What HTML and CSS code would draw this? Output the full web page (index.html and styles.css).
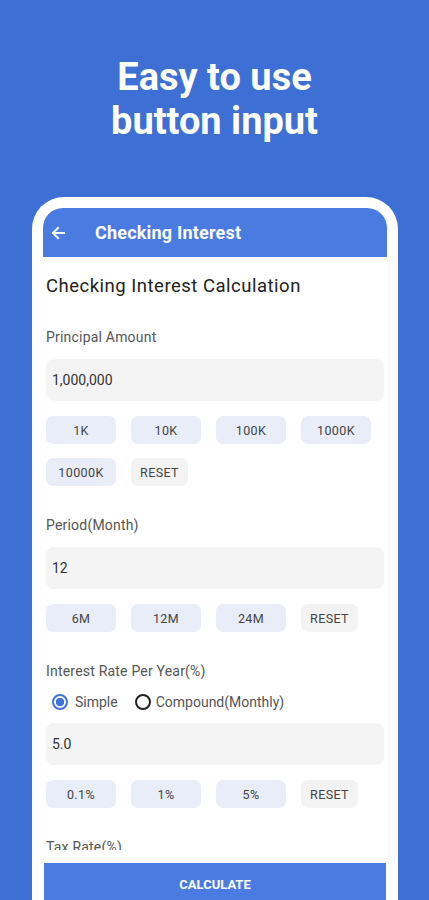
FILE: index.html
```html
<!DOCTYPE html>
<html lang="en">
<head>
  <meta charset="UTF-8" />
  <meta name="viewport" content="width=device-width, initial-scale=1.0" />
  <title>Checking Interest</title>
  <link rel="stylesheet" href="styles.css">
</head>
<body>
  <h1 class="headline">Easy to use<br>button input</h1>

  <div class="phone">
    <div class="screen">
      <div class="appbar">
        <svg class="back" width="16" height="16" viewBox="0 0 16 16">
          <path d="M14 8H3M8 3L3 8l5 5" fill="none" stroke="#fff" stroke-width="2" stroke-linecap="square"/>
        </svg>
        <span class="appbar-title">Checking Interest</span>
      </div>

      <div class="content">
        <h2 class="page-title">Checking Interest Calculation</h2>

        <div class="field">
          <div class="label">Principal Amount</div>
          <div class="input">1,000,000</div>
          <div class="chips">
            <button class="chip">1K</button>
            <button class="chip">10K</button>
            <button class="chip">100K</button>
            <button class="chip">1000K</button>
            <button class="chip">10000K</button>
            <button class="chip reset">RESET</button>
          </div>
        </div>

        <div class="field">
          <div class="label">Period(Month)</div>
          <div class="input">12</div>
          <div class="chips">
            <button class="chip">6M</button>
            <button class="chip">12M</button>
            <button class="chip">24M</button>
            <button class="chip reset">RESET</button>
          </div>
        </div>

        <div class="field">
          <div class="label">Interest Rate Per Year(%)</div>
          <div class="radios">
            <label class="radio"><span class="dot checked"></span>Simple</label>
            <label class="radio"><span class="dot"></span>Compound(Monthly)</label>
          </div>
          <div class="input">5.0</div>
          <div class="chips">
            <button class="chip">0.1%</button>
            <button class="chip">1%</button>
            <button class="chip">5%</button>
            <button class="chip reset">RESET</button>
          </div>
        </div>

        <div class="field">
          <div class="label">Tax Rate(%)</div>
        </div>
      </div>

      <div class="footer">
        <button class="calc">CALCULATE</button>
      </div>
    </div>
  </div>
</body>
</html>
```

FILE: styles.css
```css
* {
  box-sizing: border-box;
}
html, body {
  height: 100%;
}
body {
  margin: 0;
  background-color: #3e6fd4;
  font-family: Roboto, "Liberation Sans", Arial, sans-serif;
  overflow: hidden;
}

.headline {
  margin: 55px 0 0;
  color: #fff;
  font-size: 38px;
  line-height: 44px;
  font-weight: 700;
  text-align: center;
}

.phone {
  margin: 54px 0 0 32px;
  width: 366px;
  height: 703px;
  padding: 11px 11px 0;
  background-color: #fff;
  border-radius: 32px 32px 0 0;
}

.screen {
  height: 100%;
  display: flex;
  flex-direction: column;
  background-color: #fff;
  border-radius: 20px 20px 0 0;
  overflow: hidden;
}

.appbar {
  height: 49px;
  flex-shrink: 0;
  display: flex;
  align-items: center;
  padding-left: 7px;
  background-color: #4a7be0;
  color: #fff;
}
.back {
  margin-top: 1px;
}
.appbar-title {
  margin-left: 29px;
  font-size: 18px;
  font-weight: 700;
  letter-spacing: 0.2px;
}

.content {
  flex: 1;
  overflow: hidden;
  padding: 17px 3px 0;
}

.page-title {
  margin: 0;
  font-size: 18.5px;
  line-height: 24px;
  font-weight: 400;
  letter-spacing: 0.5px;
  color: #222;
}

.field {
  margin-top: 29px;
}
.label {
  font-size: 14px;
  line-height: 20px;
  letter-spacing: 0.2px;
  color: #555;
}
.input {
  margin-top: 12px;
  height: 42px;
  padding: 0 6px;
  display: flex;
  align-items: center;
  background-color: #f4f4f4;
  border-radius: 8px;
  font-size: 14px;
  color: #333;
}

.chips {
  margin-top: 15px;
  display: flex;
  flex-wrap: wrap;
  gap: 14px 15px;
}
.chip {
  width: 70px;
  height: 28px;
  border: none;
  border-radius: 7px;
  background-color: #e8edf7;
  font-family: inherit;
  font-size: 12.5px;
  letter-spacing: 0.4px;
  color: #444;
  padding: 0;
}
.chip.reset {
  width: 57px;
  background-color: #f3f3f3;
}

.radios {
  margin-top: 11px;
  height: 20px;
  display: flex;
  align-items: center;
  padding-left: 6px;
  gap: 17px;
}
.radio {
  display: flex;
  align-items: center;
  gap: 7px;
  font-size: 14px;
  color: #555;
}
.radio + .radio {
  gap: 5px;
}
.dot {
  width: 16px;
  height: 16px;
  border-radius: 50%;
  border: 2px solid #222;
}
.dot.checked {
  border-color: #3f74dd;
  background: radial-gradient(circle, #3f74dd 0 4px, transparent 4.5px);
}

.field .radios + .input {
  margin-top: 11px;
}

.footer {
  flex-shrink: 0;
  padding: 13px 1px 0;
  background-color: #fff;
}
.calc {
  width: 100%;
  height: 37px;
  border: none;
  background-color: #4a7be0;
  color: #fff;
  font-family: inherit;
  font-size: 13px;
  font-weight: 700;
  padding: 6px 0 0;
}
```
